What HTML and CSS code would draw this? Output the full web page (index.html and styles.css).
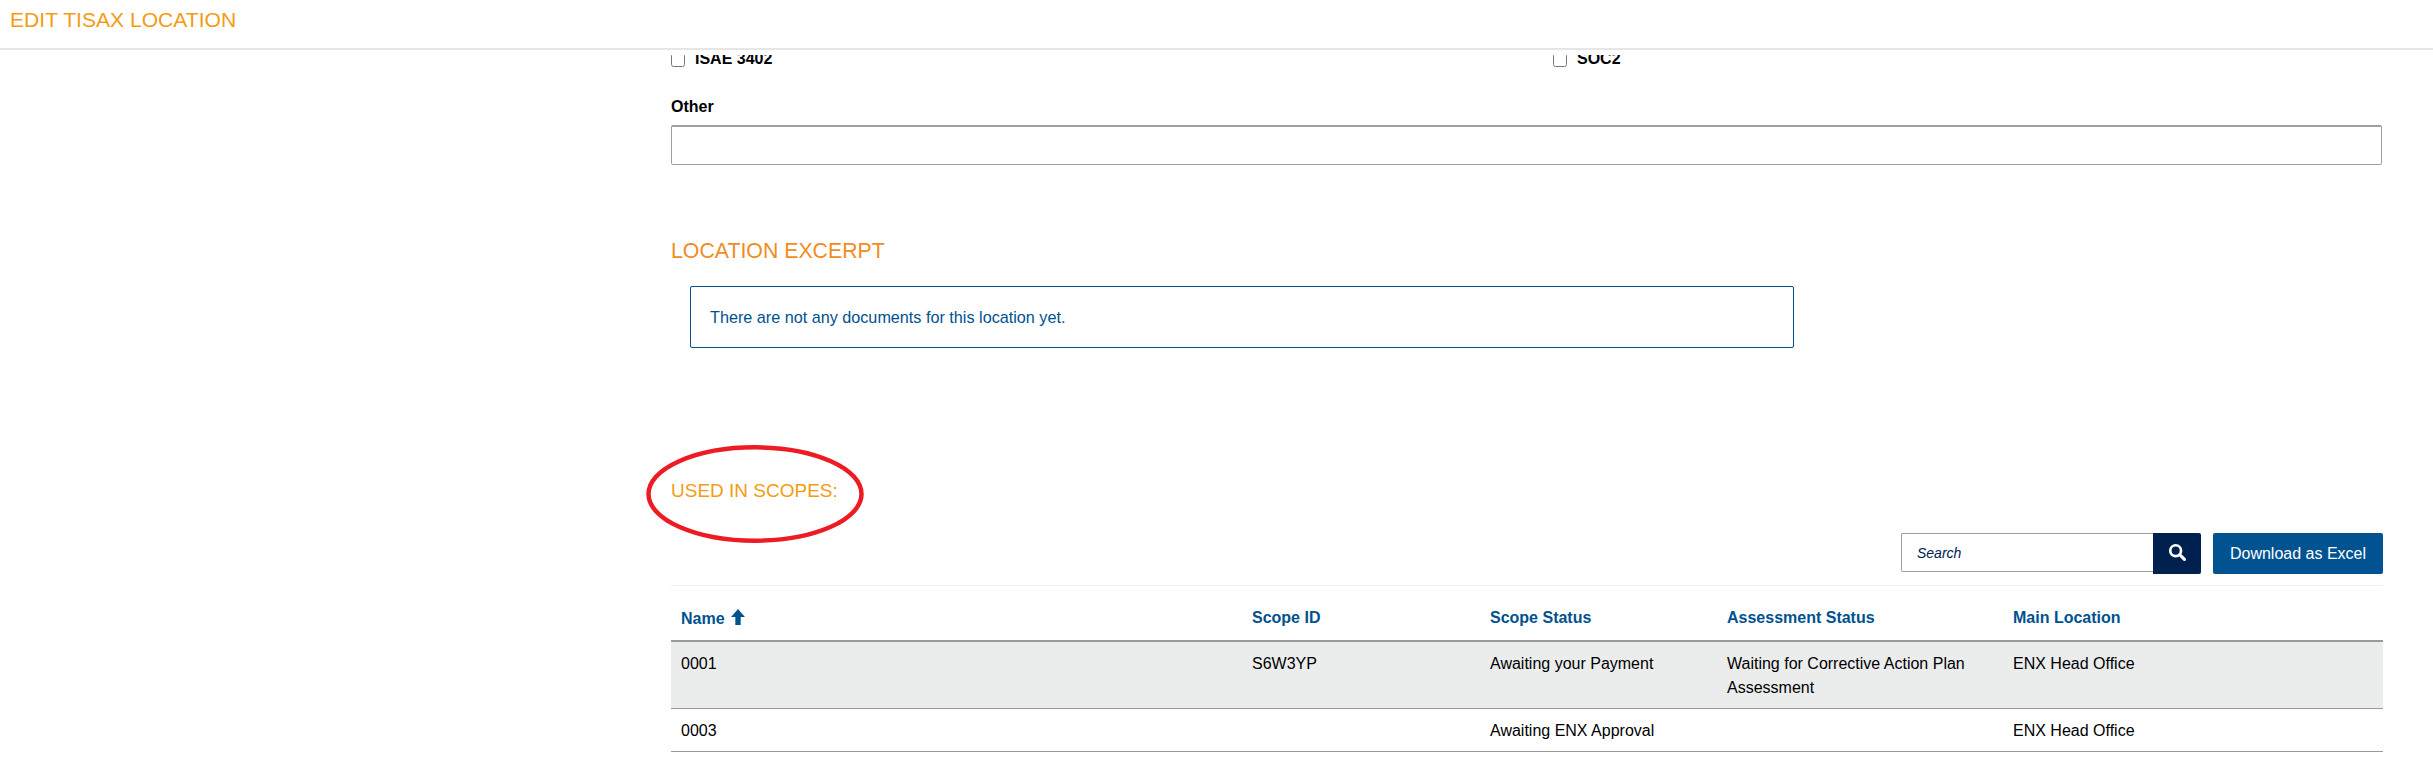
FILE: index.html
```html
<!DOCTYPE html>
<html lang="en">
<head>
<meta charset="utf-8">
<title>Edit TISAX Location</title>
<link rel="stylesheet" href="styles.css">
</head>
<body>
<header class="topbar"><h1 class="topbar-title">EDIT TISAX LOCATION</h1></header>
<main class="content">
  <div class="cert-row">
    <label class="cert cert-a"><input type="checkbox" class="cert-box"><span>ISAE 3402</span></label>
    <label class="cert"><input type="checkbox" class="cert-box"><span>SOC2</span></label>
  </div>
  <label class="field-label" for="other">Other</label>
  <input id="other" class="field-input" type="text">

  <h2 class="section-title excerpt-title">LOCATION EXCERPT</h2>
  <div class="notice">There are not any documents for this location yet.</div>

  <h2 class="section-title scopes-title">USED IN SCOPES:
    <svg class="oval" width="218" height="98" viewBox="0 0 218 98" aria-hidden="true"><ellipse cx="109" cy="49" rx="106.5" ry="46.7" fill="none" stroke="#ed1c24" stroke-width="4.5"/></svg>
  </h2>

  <div class="toolbar">
    <div class="search">
      <input class="search-input" type="text" placeholder="Search">
      <button class="search-btn" type="button" aria-label="Search">
        <svg width="18" height="18" viewBox="0 0 16 16" aria-hidden="true"><circle cx="6.8" cy="6.8" r="4.8" fill="none" stroke="#fff" stroke-width="2.4"/><path d="M10.4 10.4 14.6 14.6" stroke="#fff" stroke-width="2.8" stroke-linecap="round"/></svg>
      </button>
    </div>
    <button class="excel-btn" type="button">Download as Excel</button>
  </div>

  <table class="scopes">
    <colgroup>
      <col class="col-name"><col class="col-id"><col class="col-status"><col class="col-assess"><col class="col-main">
    </colgroup>
    <thead>
      <tr>
        <th>Name <svg class="sort" width="14" height="16" viewBox="0 0 13 15" aria-hidden="true"><path d="M6.5 0 13 7.5H9V15H4V7.5H0Z" fill="#00528f"/></svg></th>
        <th>Scope ID</th><th>Scope Status</th><th>Assessment Status</th><th>Main Location</th>
      </tr>
    </thead>
    <tbody>
      <tr class="odd"><td>0001</td><td>S6W3YP</td><td>Awaiting your Payment</td><td>Waiting for Corrective Action Plan Assessment</td><td>ENX Head Office</td></tr>
      <tr><td>0003</td><td></td><td>Awaiting ENX Approval</td><td></td><td>ENX Head Office</td></tr>
    </tbody>
  </table>
</main>
</body>
</html>
```
FILE: styles.css
```css
* { box-sizing: border-box; }
html, body { margin: 0; height: 100%; overflow: hidden; background: #fff; }
body { font-family: "Liberation Sans", Arial, sans-serif; font-size: 16px; color: #000; }

.topbar { height: 50px; border-bottom: 2px solid #e6e6e6; padding: 8px 10px 0; }
.topbar-title { margin: 0; font-size: 21.1px; line-height: 24px; font-weight: 400; color: #f39c12; }

.content { padding: 5px 50px 0 671px; }

.cert-row { display: flex; height: 13px; overflow: hidden; align-items: flex-end; font-weight: 700; font-size: 16px; }
.cert { display: flex; align-items: flex-end; line-height: 18px; height: 18px; flex: none; }
.cert-a { width: 882px; }
.cert-box { width: 14px; height: 14px; margin: 0 10px 1px 0; flex: none; }

.field-label { display: block; margin-top: 29px; font-weight: 700; line-height: 20px; }
.field-input { display: block; width: 1711px; height: 40px; margin-top: 8px; border: 1px solid #a0a0a0; border-top-width: 2px; border-radius: 2px; background: #fff; }

.section-title { margin: 0; font-size: 21.3px; line-height: 24px; font-weight: 400; color: #f28c1e; }
.excerpt-title { margin-top: 74px; }

.notice { width: 1104px; height: 62px; margin: 23px 0 0 19px; padding: 20px 19px; border: 1px solid #00528f; border-radius: 2px; color: #00528f; font-size: 16.2px; line-height: 20px; }

.scopes-title { position: relative; margin-top: 131px; color: #f39c12; font-size: 19px; }
.oval { position: absolute; left: -25px; top: -34px; }

.toolbar { display: flex; justify-content: flex-end; gap: 12px; margin-top: 30px; padding-bottom: 11px; border-bottom: 1px solid #eee; }
.search { display: flex; }
.search-input { width: 252px; height: 39px; padding: 0 15px; border: 1px solid #a0a0a0; border-right: 0; border-radius: 2px 0 0 2px; font: italic 14px "Liberation Sans", Arial, sans-serif; color: #00204f; }
.search-input::placeholder { color: #00204f; opacity: 1; }
.search-btn { width: 48px; height: 41px; padding: 0; border: 0; border-radius: 0 2px 2px 0; background: #00204f; display: flex; align-items: center; justify-content: center; padding-bottom: 4px; }
.excel-btn { width: 170px; height: 41px; padding: 0; border: 0; border-radius: 2px; background: #005291; color: #fff; font: 16px "Liberation Sans", Arial, sans-serif; }

.scopes { width: 1712px; table-layout: fixed; border-collapse: collapse; }
.col-name { width: 571px; }
.col-id { width: 238px; }
.col-status { width: 237px; }
.col-assess { width: 286px; }
.col-main { width: 380px; }
.scopes th { height: 55px; padding: 10px 10px 0; text-align: left; color: #00528f; font-size: 16px; font-weight: 700; border-bottom: 2px solid #999; }
.scopes td { padding: 10px 10px 8px; vertical-align: top; line-height: 24px; border-bottom: 1px solid #999; }
.odd { background: #ebeded; }
.sort { vertical-align: -1px; margin-left: 2px; }
```
